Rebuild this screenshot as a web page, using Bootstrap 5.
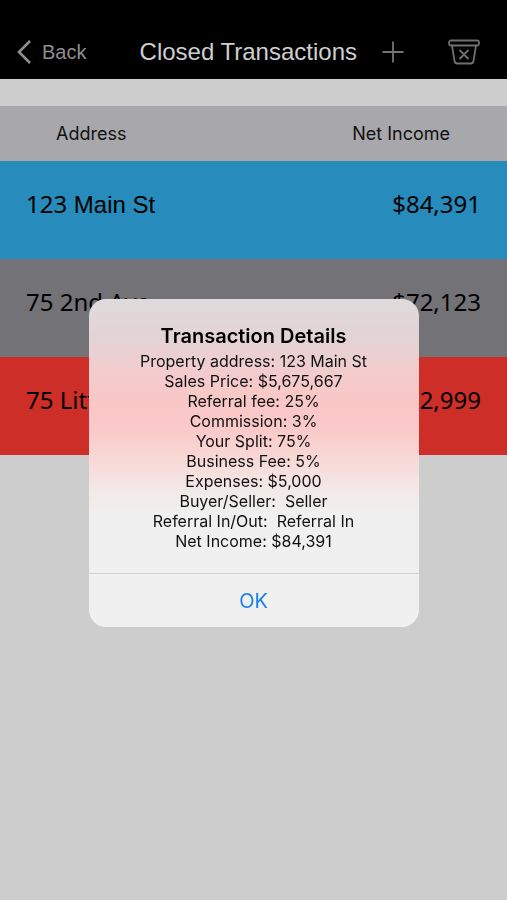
<!DOCTYPE html>
<html lang="en">
<head>
<meta charset="utf-8">
<meta name="viewport" content="width=device-width, initial-scale=1">
<title>Closed Transactions</title>
<link href="https://cdn.jsdelivr.net/npm/bootstrap@5.3.0/dist/css/bootstrap.min.css" rel="stylesheet">
<style>
  body { background: #cdcdcd; font-family: Inter, "Liberation Sans", sans-serif; color: #000; }
  .top-bar { background: #000; height: 79px; padding: 25px 26px 0 16px; font-family: "Liberation Sans", sans-serif; }
  .top-bar .btn { --bs-btn-border-width: 0; line-height: 24px; }
  .back-link { color: #8e8e8e; font-size: 20px; line-height: 26px; gap: 10px; }
  .screen-title { color: #cfcfcf; font-size: 24px; line-height: 28px; font-weight: 400; }
  .bar-actions { gap: 42px; }
  .deals { margin-top: 27px; }
  .deals th { background: #a8a7ac; height: 55px; font-size: 18px; line-height: 24px; font-weight: 400; color: #111; padding: 0 57px 0 56px; vertical-align: middle; }
  .deals td { height: 98px; padding: 27px 26px 0; font-size: 24px; line-height: 32px; vertical-align: top; font-family: "Liberation Sans", sans-serif; }
  .deals .digits { font-family: "Noto Sans", sans-serif; }
  .row-blue td { background: #278bbb; }
  .row-grey td { background: #737277; }
  .row-red td { background: #cd2f28; }
  .alert-layer { padding-top: 26px; }
  .alert-layer .modal-dialog { max-width: 330px; min-height: 100%; margin: 0 auto; }
  .alert-box { border: 0; border-radius: 17px; color: #111; overflow: hidden;
    background: linear-gradient(#e0dadc 0, #e2d4d6 36px, #f2cccd 72px, #fac7c7 104px, #fac9c9 130px, #f7dbd9 165px, #f1e9e7 190px, #eff0ef 215px, #eff0ef 100%); }
  .alert-box h2 { font-size: 20px; line-height: 26px; font-weight: 600; color: #000; }
  .alert-text { padding: 24px 12px 22px; }
  .detail-line { font-size: 16px; line-height: 20px; padding-top: 2px; white-space: pre-wrap; }
  .ok-btn { --bs-btn-color: #1a80ee; --bs-btn-hover-color: #1a80ee; height: 54px; font-size: 20px; border: 0; border-top: 1px solid #cfd0d1; border-radius: 0; }
</style>
</head>
<body>
<header class="top-bar d-flex align-items-center justify-content-between">
  <a href="#" class="back-link d-flex align-items-center text-decoration-none">
    <svg width="16" height="24" viewBox="0 0 16 24" fill="none" stroke="#8e8e8e" stroke-width="2.6" aria-hidden="true"><path d="M14 1 3 12l11 11"/></svg>Back
  </a>
  <div class="d-flex align-items-center">
    <h1 class="screen-title mb-0 me-4 text-nowrap">Closed Transactions</h1>
    <div class="bar-actions d-flex align-items-center">
      <button type="button" class="btn p-0" aria-label="Add transaction">
        <svg class="d-block" width="24" height="24" viewBox="0 0 24 24" stroke="#747474" stroke-width="1.8" aria-hidden="true"><path d="M12 1.5v21M1.5 12h21"/></svg>
      </button>
      <button type="button" class="btn p-0" aria-label="Clear closed transactions">
        <svg class="d-block" width="34" height="26" viewBox="0 0 34 26" fill="none" stroke="#707070" stroke-width="1.8" stroke-linejoin="round" stroke-linecap="round" aria-hidden="true"><rect x="2" y="1.5" width="30" height="5" rx="2"/><path d="M5 6.5 7.500 22q.4 2.500 3 2.500h13q2.600 0 3-2.500L29 6.500M13 11.500l8 8M21 11.500l-8 8"/></svg>
      </button>
    </div>
  </div>
</header>
<main>
  <table class="deals w-100">
    <thead>
      <tr><th scope="col">Address</th><th scope="col" class="text-end">Net Income</th></tr>
    </thead>
    <tbody>
      <tr class="row-blue"><td><span class="digits">123</span> Main St</td><td class="digits text-end">$84,391</td></tr>
      <tr class="row-grey"><td class="digits">75 2nd Ave</td><td class="digits text-end">$72,123</td></tr>
      <tr class="row-red"><td class="digits">75 Little</td><td class="digits text-end">$12,999</td></tr>
    </tbody>
  </table>
</main>
<div class="modal d-block alert-layer" role="dialog" aria-modal="true" aria-labelledby="alertTitle">
  <div class="modal-dialog modal-dialog-centered">
    <div class="modal-content alert-box">
      <div class="alert-text text-center">
        <h2 id="alertTitle" class="mb-0">Transaction Details</h2>
        <div class="detail-line">Property address: 123 Main St
Sales Price: $5,675,667
Referral fee: 25%
Commission: 3%
Your Split: 75%
Business Fee: 5%
Expenses: $5,000
Buyer/Seller:  Seller
Referral In/Out:  Referral In
Net Income: $84,391</div>
      </div>
      <button type="button" class="btn ok-btn w-100">OK</button>
    </div>
  </div>
</div>
<script src="https://cdn.jsdelivr.net/npm/bootstrap@5.3.0/dist/js/bootstrap.bundle.min.js"></script>
</body>
</html>
